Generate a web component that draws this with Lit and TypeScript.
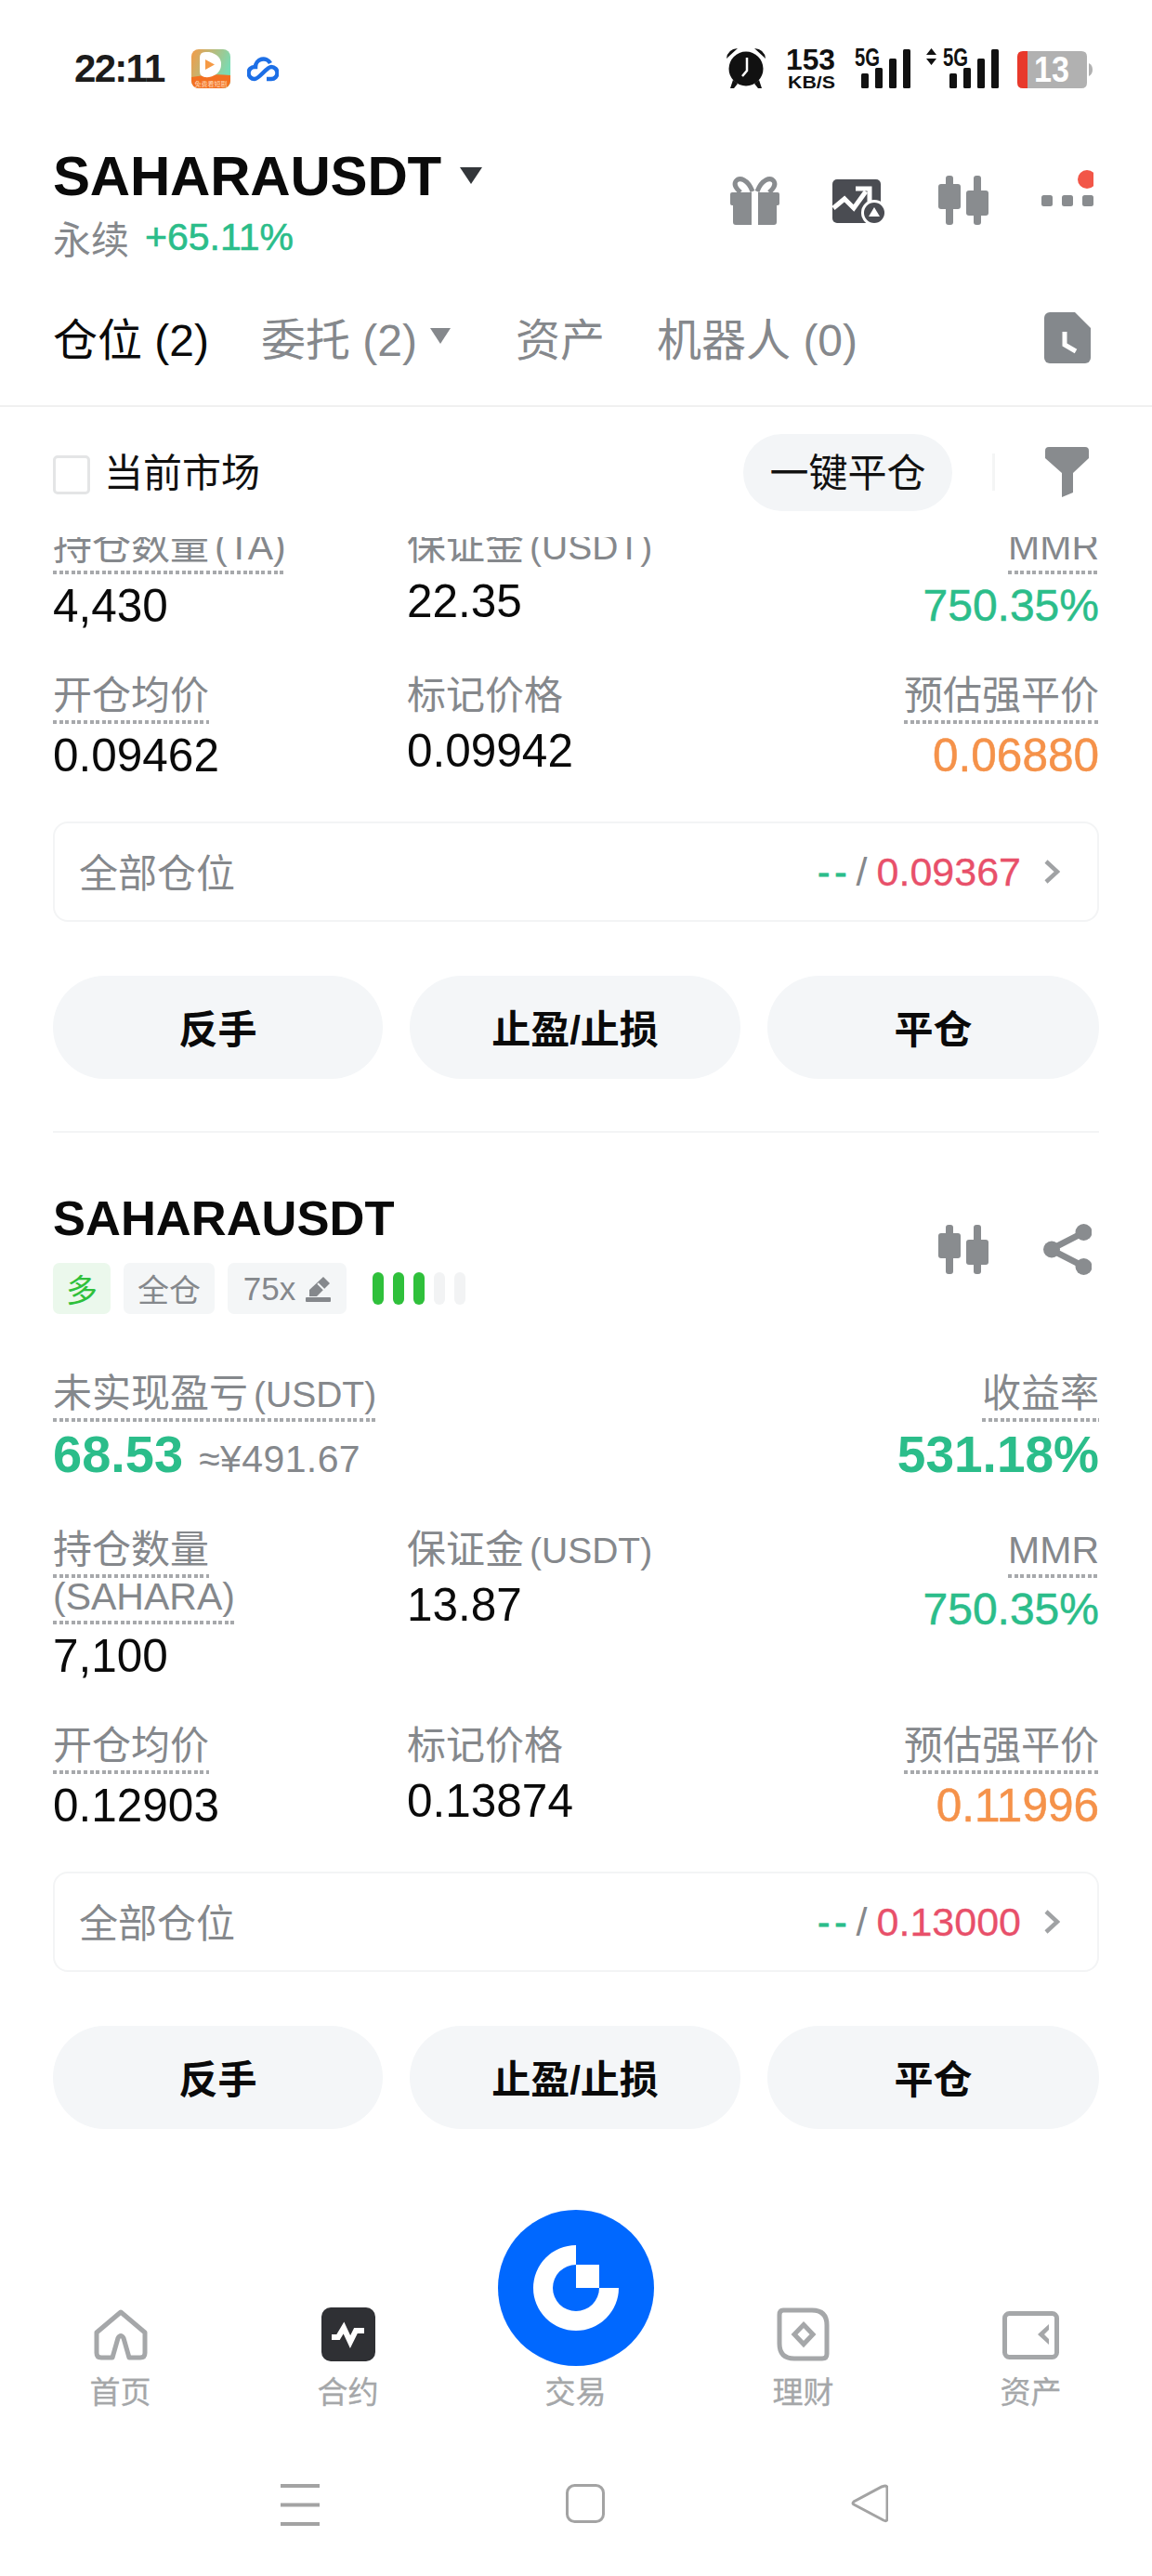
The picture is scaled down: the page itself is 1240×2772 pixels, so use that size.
import { LitElement, html, css, svg } from "lit";
import { customElement } from "lit/decorators.js";

const candles = html`<svg class="ic" width="54" height="53" viewBox="0 0 54 53" fill="#898c8f">
  <rect x="8" y="0" width="8" height="53" rx="3"/><rect x="0" y="9" width="24" height="27" rx="3"/>
  <rect x="38" y="0" width="8" height="53" rx="3"/><rect x="30" y="16" width="24" height="27" rx="3"/>
</svg>`;

const share = html`<svg class="ic" width="52" height="55" viewBox="0 0 52 55" fill="#898c8f">
  <path d="M44 9 L8 27.500 L44 46" fill="none" stroke="#898c8f" stroke-width="7"/>
  <circle cx="43.500" cy="9" r="9"/><circle cx="9" cy="27.500" r="9"/><circle cx="43.500" cy="46" r="9"/>
</svg>`;

const bars = (x: number) => svg`
  <rect x="${x}" y="26" width="8" height="16" rx="1.500"/>
  <rect x="${x + 15}" y="20" width="8" height="22" rx="1.500"/>
  <rect x="${x + 30}" y="10" width="8" height="32" rx="1.500"/>
  <rect x="${x + 45}" y="0" width="8" height="42" rx="1.500"/>`;

interface Cell { label: string[]; dotted: boolean; value: string; tone?: string; }
interface Pos { rows: Cell[][]; liq: string; }

const positions: Pos[] = [
  {
    liq: "0.09367",
    rows: [
      [
        { label: ["持仓数量 (TA)"], dotted: true, value: "4,430" },
        { label: ["保证金 (USDT)"], dotted: false, value: "22.35" },
        { label: ["MMR"], dotted: true, value: "750.35%", tone: "green" },
      ],
      [
        { label: ["开仓均价"], dotted: true, value: "0.09462" },
        { label: ["标记价格"], dotted: false, value: "0.09942" },
        { label: ["预估强平价"], dotted: true, value: "0.06880", tone: "orange" },
      ],
    ],
  },
  {
    liq: "0.13000",
    rows: [
      [
        { label: ["持仓数量", "(SAHARA)"], dotted: true, value: "7,100" },
        { label: ["保证金 (USDT)"], dotted: false, value: "13.87" },
        { label: ["MMR"], dotted: true, value: "750.35%", tone: "green" },
      ],
      [
        { label: ["开仓均价"], dotted: true, value: "0.12903" },
        { label: ["标记价格"], dotted: false, value: "0.13874" },
        { label: ["预估强平价"], dotted: true, value: "0.11996", tone: "orange" },
      ],
    ],
  },
];

const labelText = (l: string) => {
  const m = l.match(/^(.*?)\s*(\([^)]*\))$/);
  if (m) return html`${m[1]}${m[1] ? html`<span class="gap"></span>` : ""}<span class="${m[2].includes("USDT") ? "lat" : "mmr"}">${m[2]}</span>`;
  if (/^[A-Z]+$/.test(l)) return html`<span class="mmr">${l}</span>`;
  return l;
};

@customElement("app-root")
export class AppRoot extends LitElement {
  static styles = css`
    :host {
      display: block; width: 1240px; height: 2772px; background: #fff; overflow: hidden;
      font-family: "Liberation Sans", "Noto Sans CJK SC", sans-serif; color: #0a0a0a;
    }
    * { box-sizing: border-box; }
    svg { display: block; flex: none; }

    .status { height: 148px; display: flex; align-items: center; padding: 0 63px 0 80px; }
    .time { font-size: 42px; font-weight: 700; letter-spacing: -1.700px; color: #1c1c1c; width: 126px; }
    .app2 { margin-left: 18px; }
    .status-right { margin-left: auto; }

    .header { height: 170px; padding: 12px 63px 0 57px; display: flex; justify-content: space-between; }
    .title-row { display: flex; align-items: center; height: 60px; }
    .title { font-size: 60px; font-weight: 700; line-height: 60px; letter-spacing: -0.200px; }
    .caret { margin-left: 19px; margin-top: -2px; }
    .sub { display: flex; align-items: center; height: 46px; margin-top: 12px; }
    .sub .cn { font-size: 41px; color: #85888c; }
    .sub .pct { font-size: 41px; color: #2bbd8a; margin-left: 17px; -webkit-text-stroke: 0.600px #2bbd8a; }
    .actions { display: flex; align-items: flex-end; gap: 57px; height: 82px; }

    .tabs {
      height: 120px; padding: 0 66px 31px 57px; display: flex; align-items: center;
      border-bottom: 2px solid #f0f0f0; font-size: 48px; color: #85888c;
    }
    .tab { margin-right: 56px; display: flex; align-items: center; white-space: pre; }
    .tab.on { color: #0a0a0a; }
    .tab.more { margin-right: 70px; }
    .tab .arr { margin-left: 14px; }
    .doc { margin-left: auto; margin-top: 4px; }

    .filter { height: 140px; padding: 0 68px 0 57px; display: flex; align-items: center; }
    .check { width: 40px; height: 42px; border: 3px solid #e4e5e6; border-radius: 5px; margin-top: 6px; }
    .filter .txt { font-size: 42px; margin-left: 15px; color: #111; padding-bottom: 5px; }
    .pill {
      margin-left: auto; width: 225px; height: 83px; border-radius: 42px; background: #f3f5f7;
      display: flex; align-items: center; justify-content: center; font-size: 42px; color: #111; padding-bottom: 5px;
    }
    .sep { width: 3px; height: 40px; background: #f4f5f5; margin: 0 54px 0 43px; }

    .scroll { height: 1762px; overflow: hidden; padding: 0 57px; }
    .scroll-inner { margin-top: -13px; }

    .grid { display: grid; grid-template-columns: 381px 1fr auto; row-gap: 46px; }
    .cell { display: flex; flex-direction: column; align-items: flex-start; }
    .cell.end { align-items: flex-end; }
    .lab { font-size: 42px; line-height: 46px; height: 48px; color: #85888c; white-space: nowrap; }
    .lab.dot {
      height: 53px;
      background: repeating-linear-gradient(90deg, #a7a9ac 0 4px, transparent 4px 6.600px) left bottom / 100% 4px no-repeat;
    }
    .lab + .lab { margin-top: -3px; }
    .lat { font-size: 39px; }
    .mmr { font-size: 41px; }
    .gap { display: inline-block; width: 6px; }
    .val { font-size: 49.500px; line-height: 56px; margin-top: 6px; white-space: nowrap; }
    .green { color: #2bbd8a; }
    .orange { color: #f5924a; }
    .val.green { font-size: 48px; }
    .val.green, .val.orange { -webkit-text-stroke: 0.500px currentColor; }

    .all {
      margin-top: 43px; height: 108px; border: 2px solid #f3f4f5; border-radius: 16px;
      padding: 0 40px 3px 26px; display: flex; align-items: center; font-size: 42px; color: #85888c;
    }
    .all .nums { margin-left: auto; display: flex; align-items: center; font-size: 43px; margin-top: 3px; }
    .all .dash { color: #2bbd8a; letter-spacing: 5px; font-size: 40px; -webkit-text-stroke: 0.800px #2bbd8a; }
    .all .slash { margin: 0 10px 0 5px; color: #85888c; }
    .all .liq { color: #e8506a; -webkit-text-stroke: 0.300px #e8506a; }
    .all .chev { margin-left: 24px; }

    .btns { margin-top: 58px; display: grid; grid-template-columns: 355px 356px 357px; justify-content: space-between; }
    .btn {
      height: 111px; border-radius: 56px; background: #f4f6f8; font-size: 42px; font-weight: 700;
      display: flex; align-items: center; justify-content: center; padding-bottom: 3px;
    }
    .rule { height: 2px; margin-top: 56px; background: #f3f4f5; }

    .card-head { margin-top: 62px; display: flex; justify-content: space-between; padding-right: 8px; }
    .h2 { font-size: 52.500px; font-weight: 700; line-height: 60px; }
    .head-ic { display: flex; gap: 59px; margin-top: 36px; height: 55px; align-items: center; }
    .tags { display: flex; align-items: center; margin-top: -13px; gap: 14px; height: 55px; }
    .tag {
      height: 55px; border-radius: 7px; background: #f4f6f7; color: #85888c; font-size: 34px;
      display: flex; align-items: center; justify-content: center; padding: 0 15px;
    }
    .tag.long { background: #ebf8ec; color: #2fc03b; width: 62px; padding: 0; }
    .tag.lev { width: 128px; padding: 0; gap: 11px; font-size: 35px; }
    .lev-bars { display: flex; gap: 10.500px; margin-left: 14px; }
    .lev-bars i { width: 11.500px; height: 35px; border-radius: 6px; background: #f2f3f4; }
    .lev-bars i.on { background: #2fc03b; }

    .pnl { margin-top: 63px; display: flex; justify-content: space-between; margin-bottom: 50px; }
    .big { display: flex; align-items: baseline; margin-top: 5px; height: 60px; line-height: 60px; }
    .big b { font-size: 56px; font-weight: 700; }
    .big span { font-size: 41px; color: #85888c; margin-left: 17px; letter-spacing: 0.400px; }

    .tabbar { height: 300px; padding: 0 7px 45px; display: grid; grid-template-columns: repeat(5, 245px); }
    .tb { display: flex; flex-direction: column; align-items: center; justify-content: flex-end; }
    .tb .cap { font-size: 33px; line-height: 40px; color: #a5a7a9; margin-top: 14px; -webkit-text-stroke: 0.300px #a5a7a9; }
    .tb.mid .cap { margin-top: 9px; }
    .nav { height: 132px; padding: 33px 0 0 302px; display: flex; gap: 265px; align-items: flex-start; }
  `;

  private cell(c: Cell, i: number) {
    return html`<div class="cell ${i === 2 ? "end" : ""}">
      ${c.label.map((l) => html`<div class="lab ${c.dotted ? "dot" : ""}">${labelText(l)}</div>`)}
      <div class="val ${c.tone ?? ""}">${c.value}</div>
    </div>`;
  }

  private grid(p: Pos) {
    return html`<div class="grid">${p.rows.flat().map((c, i) => this.cell(c, i % 3))}</div>
      <div class="all">全部仓位
        <div class="nums"><span class="dash">--</span><span class="slash">/</span><span class="liq">${p.liq}</span>
          <svg class="chev" width="18" height="28" viewBox="0 0 18 28"><path d="M3 3 L15 14 L3 25" fill="none" stroke="#a0a2a4" stroke-width="4.500"/></svg>
        </div>
      </div>
      <div class="btns"><div class="btn">反手</div><div class="btn">止盈/止损</div><div class="btn">平仓</div></div>`;
  }

  render() {
    return html`
      <div class="status">
        <div class="time">22:11</div>
        <svg width="42" height="42" viewBox="0 0 42 42">
          <defs>
            <linearGradient id="ga" x1="0" y1="0" x2="1" y2="0.400"><stop offset="0" stop-color="#f59a45"/><stop offset="1" stop-color="#79dcb4"/></linearGradient>
          </defs>
          <rect width="42" height="42" rx="8" fill="url(#ga)"/>
          <path d="M0 30 Q21 26 42 28 V34 A8 8 0 0 1 34 42 H8 A8 8 0 0 1 0 34Z" fill="#f37021"/>
          <path d="M9 9 Q9 3 15 3 H19 Q32 6 32 16 Q32 27 19 30 Q9 31 9 24Z" fill="#fff"/>
          <path d="M15 11 L25 16.500 L15 22Z" fill="#f59a45"/>
          <text x="21" y="39.500" font-size="7" text-anchor="middle" fill="#ffd9b8">免费看短剧</text>
        </svg>
        <svg class="app2" width="34" height="28" viewBox="0 0 34 28" fill="none" stroke="#1d6fe6" stroke-width="4.500">
          <path d="M21 25 H26 A6.500 6.500 0 0 0 26 12 C21 12 13 25 8 25 A6.500 6.500 0 0 1 8 12 H9 A8.500 8.500 0 0 1 25 8"/>
        </svg>
        <svg class="status-right" width="396" height="76" viewBox="781 36 396 76">
          <g fill="#111">
            <circle cx="803" cy="74" r="18.500"/>
            <path d="M782 63 Q783 53 794 52 Z M824 63 Q823 53 812 52 Z"/>
            <path d="M789 86 L786 95 H790 L794 90Z M817 86 L820 95 H816 L812 90Z"/>
          </g>
          <path d="M804 62 V76 L799 82" fill="none" stroke="#fff" stroke-width="2.500"/>
          <g fill="#111" font-weight="700" font-family="Liberation Sans">
            <text x="846" y="75" font-size="32" textLength="53" lengthAdjust="spacingAndGlyphs">153</text>
            <text x="848" y="95" font-size="19" textLength="51" lengthAdjust="spacingAndGlyphs">KB/S</text>
            <text x="920" y="71" font-size="28" textLength="27" lengthAdjust="spacingAndGlyphs">5G</text>
            <text x="1015" y="71" font-size="28" textLength="27" lengthAdjust="spacingAndGlyphs">5G</text>
            <path d="M1002.500 52 L1008 59 H997Z M1002.500 70 L1008 63 H997Z"/>
          </g>
          <g fill="#111" transform="translate(0 53)">${bars(927)}${bars(1022)}</g>
          <path d="M1106 55 H1164 Q1170 55 1170 61 V89 Q1170 95 1164 95 H1106Z" fill="#b1b1b1"/>
          <path d="M1106 55 H1101 Q1095 55 1095 61 V89 Q1095 95 1101 95 H1106Z" fill="#e8392b"/>
          <path d="M1172 68 Q1176 70 1176 75 Q1176 80 1172 82Z" fill="#b1b1b1"/>
          <text x="1113" y="88" font-size="38" font-weight="700" fill="#fff" font-family="Liberation Sans" textLength="38" lengthAdjust="spacingAndGlyphs">13</text>
        </svg>
      </div>

      <div class="header">
        <div>
          <div class="title-row"><div class="title">SAHARAUSDT</div>
            <svg class="caret" width="26" height="18" viewBox="0 0 26 18"><path d="M1 0 H25 L13 18Z" fill="#33363a"/></svg>
          </div>
          <div class="sub"><span class="cn">永续</span><span class="pct">+65.11%</span></div>
        </div>
        <div class="actions">
          <svg width="53" height="53" viewBox="0 0 53 53" fill="#898c8f">
            <path d="M24 17 C19 4 10 1 6 6 C3 11 8 15 11 18" fill="none" stroke="#898c8f" stroke-width="5"/>
            <path d="M29 17 C34 4 43 1 47 6 C50 11 45 15 42 18" fill="none" stroke="#898c8f" stroke-width="5"/>
            <path d="M2 18 H23 V32 H2 Q0 32 0 30 V20 Q0 18 2 18Z M30 18 H51 Q53 18 53 20 V30 Q53 32 51 32 H30Z"/>
            <path d="M3 32 H23 V53 H6 Q3 53 3 50Z M30 32 H50 V50 Q50 53 47 53 H30Z"/>
          </svg>
          <svg width="57" height="49" viewBox="0 0 57 49">
            <rect x="0" y="0" width="52" height="47" rx="5" fill="#4a4c52"/>
            <path d="M1 31 L13 21 L23 31 L36 13" fill="none" stroke="#fff" stroke-width="5"/>
            <path d="M25 10 H40 V24" fill="none" stroke="#fff" stroke-width="5"/>
            <circle cx="45" cy="36" r="14" fill="#fff"/>
            <circle cx="45" cy="36" r="11" fill="#4a4c52"/>
            <path d="M45 30 L51 40 H39Z" fill="#fff"/>
          </svg>
          ${candles}
          <svg width="56" height="59" viewBox="0 0 56 59" fill="#898c8f">
            <rect x="0" y="27" width="12" height="12" rx="2.500"/><rect x="22" y="27" width="12" height="12" rx="2.500"/><rect x="44" y="27" width="12" height="12" rx="2.500"/>
            <circle cx="49" cy="10" r="10" fill="#f25648"/>
          </svg>
        </div>
      </div>

      <div class="tabs">
        <div class="tab on">仓位 (2)</div>
        <div class="tab more">委托 (2)<svg class="arr" width="22" height="17" viewBox="0 0 22 17"><path d="M0 0 H22 L11 17Z" fill="#85888c"/></svg></div>
        <div class="tab">资产</div>
        <div class="tab">机器人 (0)</div>
        <svg class="doc" width="50" height="55" viewBox="0 0 50 55">
          <path d="M6 0 H33 L50 17 V49 A6 6 0 0 1 44 55 H6 A6 6 0 0 1 0 49 V6 A6 6 0 0 1 6 0Z" fill="#84888c"/>
          <path d="M22 21 V35 L34 42" fill="none" stroke="#fff" stroke-width="5"/>
        </svg>
      </div>

      <div class="filter">
        <div class="check"></div>
        <div class="txt">当前市场</div>
        <div class="pill">一键平仓</div>
        <div class="sep"></div>
        <svg width="47" height="54" viewBox="0 0 47 54">
          <path d="M4 0 H43 Q47 0 47 4 V12 L30 28 V49 L18 54 V28 L0 12 V4 Q0 0 4 0Z" fill="#888b8e"/>
        </svg>
      </div>

      <div class="scroll"><div class="scroll-inner">
        ${this.grid(positions[0])}
        <div class="rule"></div>
        <div class="card-head">
          <div class="h2">SAHARAUSDT</div>
          <div class="head-ic">${candles}${share}</div>
        </div>
        <div class="tags">
          <div class="tag long">多</div>
          <div class="tag">全仓</div>
          <div class="tag lev">75x
            <svg width="27" height="28" viewBox="0 0 27 28" fill="#85888c">
              <path d="M19 1 L26 8 L12 22 H4 V15Z"/>
              <path d="M13 8 L20 15" stroke="#f4f6f7" stroke-width="2"/>
              <rect x="0" y="23" width="27" height="5" rx="1"/>
            </svg>
          </div>
          <div class="lev-bars"><i class="on"></i><i class="on"></i><i class="on"></i><i></i><i></i></div>
        </div>
        <div class="pnl">
          <div class="cell">
            <div class="lab dot">${labelText("未实现盈亏 (USDT)")}</div>
            <div class="big"><b class="green">68.53</b><span>≈¥491.67</span></div>
          </div>
          <div class="cell end">
            <div class="lab dot">收益率</div>
            <div class="big"><b class="green" style="font-size:55px">531.18%</b></div>
          </div>
        </div>
        ${this.grid(positions[1])}
      </div></div>

      <div class="tabbar">
        <div class="tb">
          <svg width="58" height="56" viewBox="0 0 58 56"><path d="M29 3 L55 25 V47 Q55 52 50 52 H38 L32 31 Q29 26 26 31 L20 52 H8 Q3 52 3 47 V25Z" fill="none" stroke="#a5a7a9" stroke-width="5" stroke-linejoin="round"/></svg>
          <div class="cap">首页</div>
        </div>
        <div class="tb">
          <svg width="58" height="58" viewBox="0 0 58 58">
            <rect width="58" height="58" rx="10" fill="#2f3034"/>
            <path d="M11 32 H18 L24 22 L31 37 L37 25 H46" fill="none" stroke="#fff" stroke-width="6"/>
          </svg>
          <div class="cap">合约</div>
        </div>
        <div class="tb mid">
          <svg width="168" height="168" viewBox="-84 -84 168 168">
            <circle r="84" fill="#0068ff"/>
            <path d="M0 -46 A46 46 0 1 0 46 0 H25 A25 25 0 1 1 0 -25Z" fill="#fff"/>
            <rect x="0" y="-25" width="25" height="25" fill="#fff"/>
          </svg>
          <div class="cap">交易</div>
        </div>
        <div class="tb">
          <svg width="57" height="58" viewBox="0 0 57 58" fill="none" stroke="#a5a7a9" stroke-width="5">
            <path d="M7 3 H38 Q54 3 54 19 V50 Q54 55 49 55 H19 Q3 55 3 39 V8 Q3 3 7 3Z"/>
            <path d="M29 18.500 L39 29 L29 39.500 L19 29Z"/>
          </svg>
          <div class="cap">理财</div>
        </div>
        <div class="tb">
          <svg width="61" height="54" viewBox="0 0 61 54">
            <rect x="2.500" y="2.500" width="56" height="47" rx="5" fill="none" stroke="#a5a7a9" stroke-width="5"/>
            <path d="M50 14 L38 25 L50 36 V30 L45 25 L50 20Z" fill="#a5a7a9"/>
          </svg>
          <div class="cap">资产</div>
        </div>
      </div>

      <div class="nav">
        <svg width="42" height="46" viewBox="0 0 42 46" fill="#a3a3a3"><rect y="0" width="42" height="4"/><rect y="20.500" width="42" height="4"/><rect y="41" width="42" height="4"/></svg>
        <svg width="42" height="42" viewBox="0 0 42 42"><rect x="1.500" y="1.500" width="39" height="39" rx="8" fill="none" stroke="#a3a3a3" stroke-width="3"/></svg>
        <svg width="40" height="42" viewBox="0 0 40 42"><path d="M37 2 Q39 2 39 5 V37 Q39 41 35 39 L3 22 Q1 21 3 19 L33 3 Q36 2 37 2Z" fill="none" stroke="#a3a3a3" stroke-width="3"/></svg>
      </div>
    `;
  }
}
